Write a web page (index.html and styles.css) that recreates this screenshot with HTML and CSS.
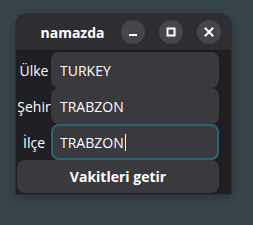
FILE: index.html
```html
<!DOCTYPE html>
<html>
<head>
<meta charset="utf-8">
<link rel="stylesheet" href="styles.css">
</head>
<body>
<div class="window">
  <div class="titlebar">
    <div class="title">namazda</div>
    <div class="controls">
      <div class="ctl"><svg width="24" height="24" viewBox="0 0 24 24"><rect x="8" y="14" width="8" height="2" fill="#fff"/></svg></div>
      <div class="ctl"><svg width="24" height="24" viewBox="0 0 24 24"><rect x="8.5" y="8.5" width="7" height="7" fill="none" stroke="#fff" stroke-width="2"/></svg></div>
      <div class="ctl"><svg width="24" height="24" viewBox="0 0 24 24"><path d="M8.5 8.5 L15.5 15.5 M15.5 8.5 L8.5 15.5" stroke="#fff" stroke-width="2" stroke-linecap="square"/></svg></div>
    </div>
  </div>
  <div class="content">
    <div class="form">
      <div class="label">Ülke</div>
      <div class="entry">TURKEY</div>
      <div class="label">Şehir</div>
      <div class="entry">TRABZON</div>
      <div class="label">İlçe</div>
      <div class="entry focus">TRABZON<span class="cursor"></span></div>
      <div class="btn">Vakitleri getir</div>
    </div>
  </div>
</div>
</body>
</html>
```
FILE: styles.css
```css
html, body {
  margin: 0;
  padding: 0;
  background: #37444a;
  width: 253px;
  height: 225px;
  overflow: hidden;
}
body {
  padding: 14px 0 0 16px;
  box-sizing: border-box;
  font-family: "Open Sans", "DejaVu Sans", sans-serif;
  color: #ffffff;
}
.window {
  width: 215px;
  height: 180px;
  border-radius: 12px 12px 0 0;
  background: #1f1e22;
  box-shadow: 0 0 0 1px #2a3035, 0 3px 12px rgba(0,0,0,0.25);
  overflow: hidden;
  display: flex;
  flex-direction: column;
}
.titlebar {
  height: 36px;
  background: #2e2d32;
  border-bottom: 1px solid #18171b;
  display: flex;
  align-items: center;
  flex-shrink: 0;
}
.title {
  font-weight: bold;
  font-size: 14px;
  box-sizing: border-box;
  padding-left: 8px;
  width: 105px;
  text-align: center;
}
.controls {
  display: flex;
  gap: 14px;
}
.ctl {
  width: 24px;
  height: 24px;
  border-radius: 50%;
  background: #46454a;
  display: flex;
}
.content {
  padding: 1px 11px 0 1px;
}
.form {
  display: grid;
  grid-template-columns: 34px 168px;
  grid-auto-rows: 36px;
  align-items: stretch;
}
.label {
  display: flex;
  align-items: center;
  justify-content: center;
  font-size: 14px;
}
.entry {
  background: #3a393d;
  border-radius: 8px;
  display: flex;
  align-items: center;
  padding-left: 9px;
  font-size: 14px;
}
.entry.focus {
  box-shadow: inset 0 0 0 2px #2b6373;
}
.cursor {
  display: inline-block;
  width: 1px;
  height: 17px;
  background: #fff;
  margin-left: 1px;
}
.btn {
  grid-column: 1 / 3;
  background: #3a393d;
  border-radius: 8px;
  display: flex;
  align-items: center;
  justify-content: center;
  font-weight: bold;
  font-size: 14px;
  height: 33px;
}
```
